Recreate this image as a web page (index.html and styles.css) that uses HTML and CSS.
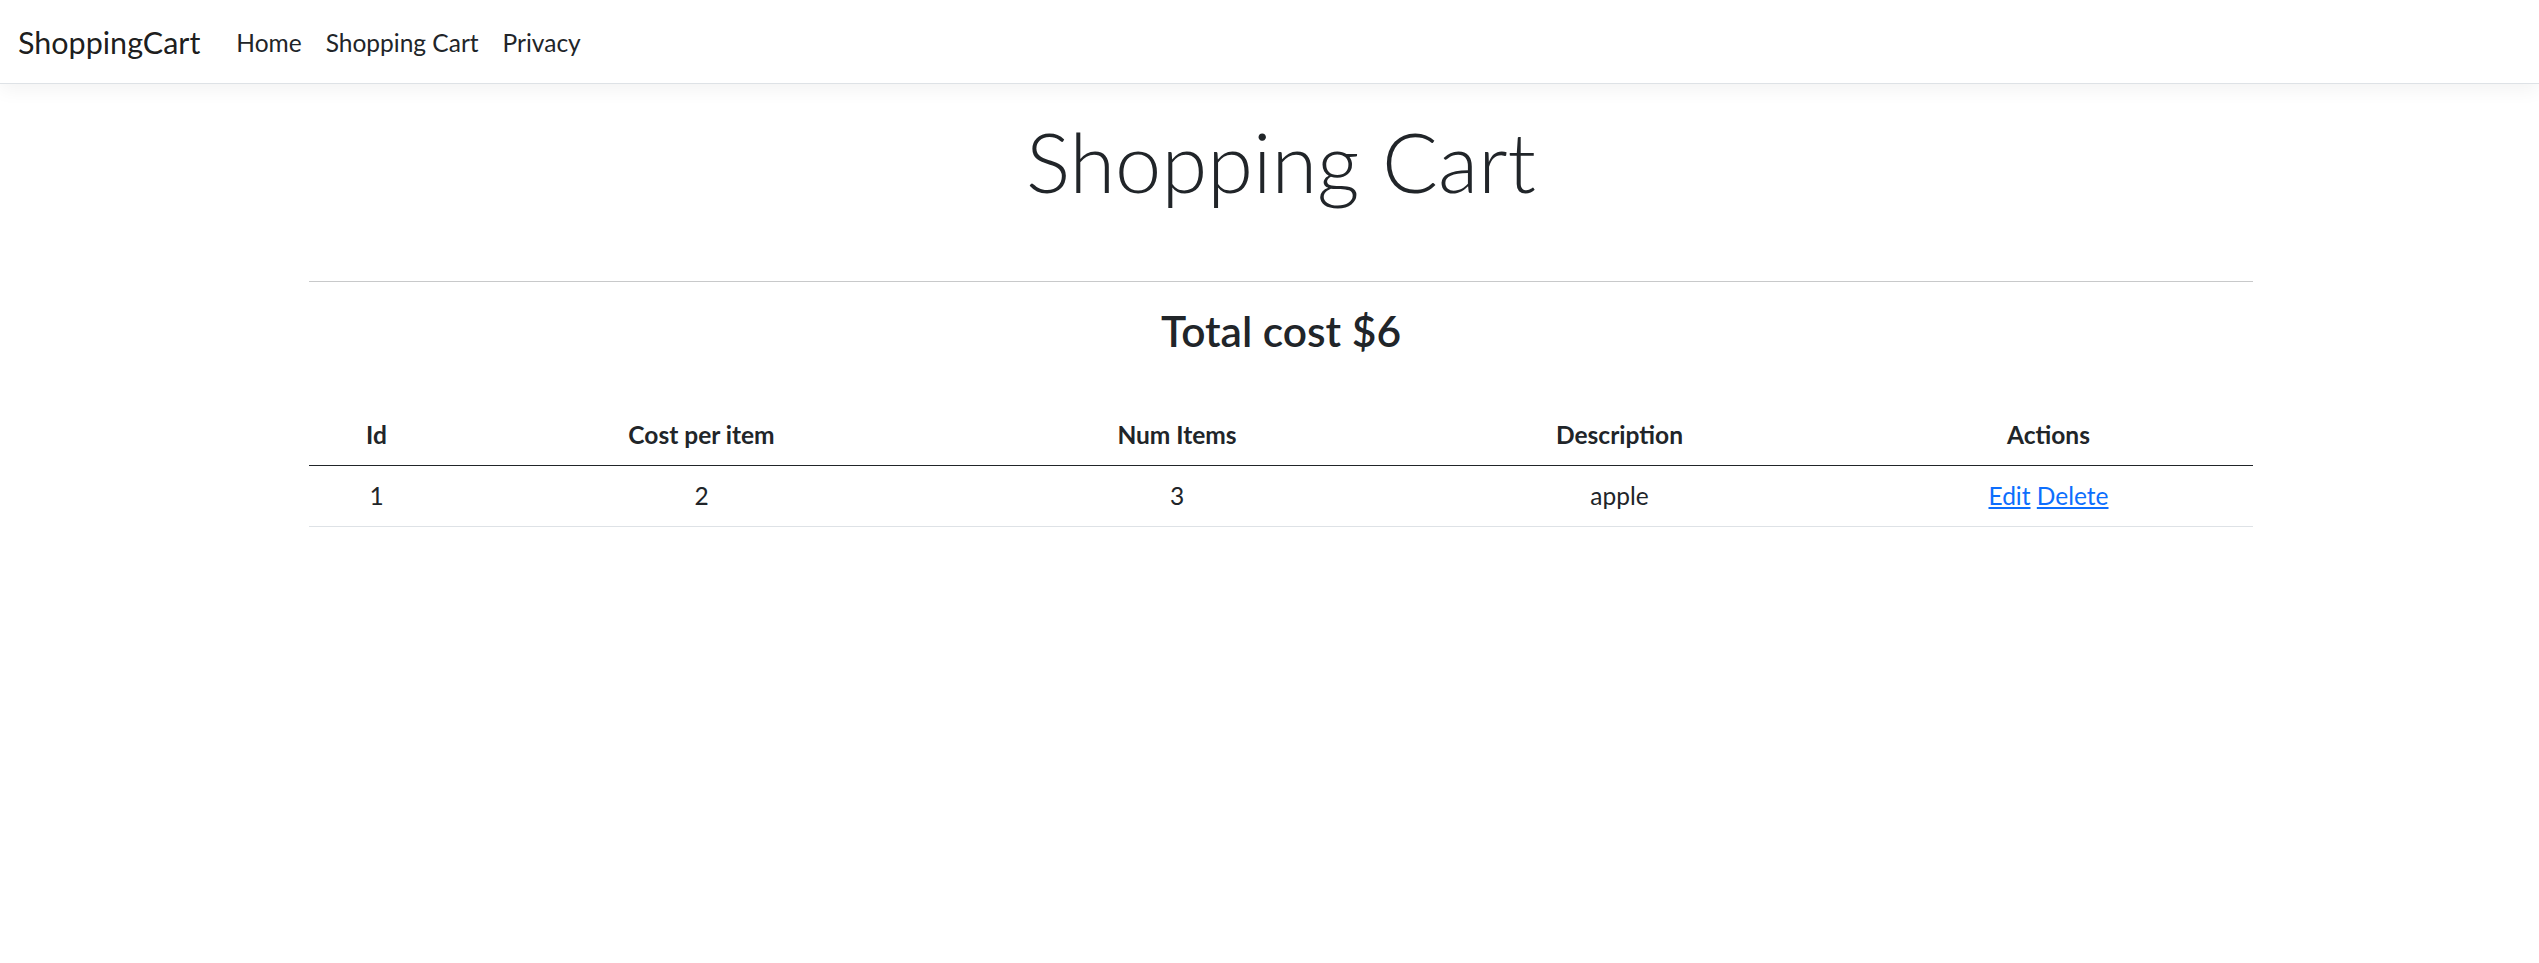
FILE: index.html
```html
<!DOCTYPE html>
<html lang="en">
<head>
<meta charset="utf-8">
<title>Shopping Cart - ShoppingCart</title>
<link rel="stylesheet" href="styles.css">
</head>
<body>
<header class="topbar">
  <nav class="navbar">
    <a class="brand" href="#">ShoppingCart</a>
    <ul class="nav">
      <li><a class="nav-link" href="#">Home</a></li>
      <li><a class="nav-link" href="#">Shopping Cart</a></li>
      <li><a class="nav-link" href="#">Privacy</a></li>
    </ul>
  </nav>
</header>
<div class="page">
  <main class="container">
    <h1 class="title">Shopping Cart</h1>
    <hr class="divider">
    <h3 class="total">Total cost $6</h3>
    <table class="cart">
      <colgroup>
        <col class="c-id"><col class="c-cost"><col class="c-num"><col class="c-desc"><col class="c-act">
      </colgroup>
      <thead>
        <tr><th>Id</th><th>Cost per item</th><th>Num Items</th><th>Description</th><th>Actions</th></tr>
      </thead>
      <tbody>
        <tr><td>1</td><td>2</td><td>3</td><td>apple</td><td><a href="#">Edit</a> <a href="#">Delete</a></td></tr>
      </tbody>
    </table>
  </main>
</div>
</body>
</html>
```
FILE: styles.css
```css
html, body {
  margin: 0;
  padding: 0;
}
body {
  font-family: Lato, "Liberation Sans", Arial, sans-serif;
  font-size: 24.5px;
  line-height: 1.5;
  color: #212529;
  background: #fff;
}
.topbar {
  background: #fff;
  border-bottom: 1px solid #dee2e6;
  box-shadow: 0 6px 18px rgba(0, 0, 0, 0.05);
}
.navbar {
  display: flex;
  align-items: center;
  height: 83px;
  padding: 0 18px;
  box-sizing: border-box;
}
.brand {
  font-size: 30.5px;
  line-height: 45px;
  padding-top: 2px;
  color: rgba(0, 0, 0, 0.9);
  text-decoration: none;
  margin-right: 24px;
}
.nav {
  display: flex;
  list-style: none;
  margin: 0;
  padding: 2px 0 0;
}
.nav-link {
  display: block;
  padding: 12px 12px;
  line-height: 36px;
  color: #212529;
  text-decoration: none;
}
.page {
  padding-left: 23px;
  padding-top: 24px;
}
.container {
  display: block;
  max-width: 1944px;
  margin: 0 auto;
}
.title {
  margin: 3px 0 69px;
  font-size: 83px;
  line-height: 101px;
  font-weight: 300;
  text-align: center;
}
.divider {
  margin: 0 0 24px;
  border: 0;
  border-top: 1px solid #c8c9ca;
  height: 0;
}
.total {
  margin: 0 0 49px;
  font-size: 42.5px;
  line-height: 50px;
  font-weight: 600;
  text-align: center;
}
.cart {
  width: 100%;
  table-layout: fixed;
  border-collapse: collapse;
  text-align: center;
}
.c-id { width: 135px; }
.c-cost { width: 515px; }
.c-num { width: 436px; }
.c-desc { width: 449px; }
.c-act { width: 409px; }
.cart th, .cart td {
  padding: 12px;
  line-height: 36px;
  border-bottom: 1px solid #dee2e6;
}
.cart th {
  font-weight: 700;
  border-bottom-color: #212529;
}
.cart a {
  color: #0d6efd;
}
```
